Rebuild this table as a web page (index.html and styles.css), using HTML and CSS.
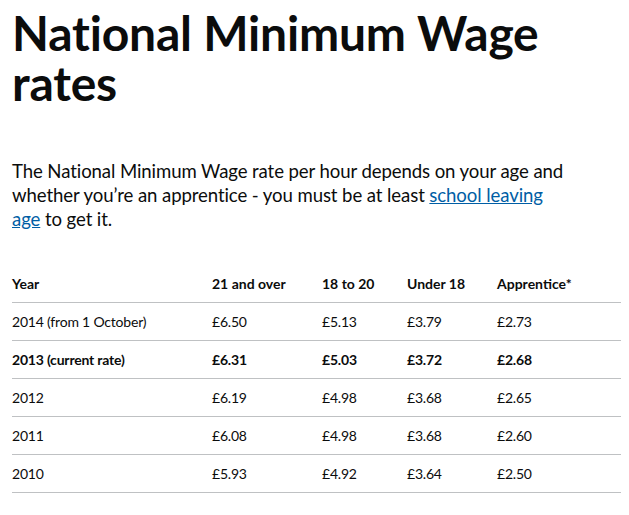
FILE: index.html
```html
<!DOCTYPE html>
<html lang="en">
<head>
<meta charset="utf-8">
<title>National Minimum Wage rates</title>
<link rel="stylesheet" href="styles.css">
</head>
<body>
<main class="page">
  <h1 class="title">National Minimum Wage rates</h1>
  <p class="lead">The National Minimum Wage rate per hour depends on your age and whether you’re an apprentice - you must be at least <a href="#" class="link">school leaving age</a>&nbsp;to get it.</p>
  <table class="rates">
    <thead>
      <tr><th class="c-year">Year</th><th class="c-21">21 and over</th><th class="c-18">18 to 20</th><th class="c-u18">Under 18</th><th class="c-app">Apprentice*</th></tr>
    </thead>
    <tbody>
      <tr><td>2014 (from 1 October)</td><td>£6.50</td><td>£5.13</td><td>£3.79</td><td>£2.73</td></tr>
      <tr class="current"><td>2013 (current rate)</td><td>£6.31</td><td>£5.03</td><td>£3.72</td><td>£2.68</td></tr>
      <tr><td>2012</td><td>£6.19</td><td>£4.98</td><td>£3.68</td><td>£2.65</td></tr>
      <tr><td>2011</td><td>£6.08</td><td>£4.98</td><td>£3.68</td><td>£2.60</td></tr>
      <tr><td>2010</td><td>£5.93</td><td>£4.92</td><td>£3.64</td><td>£2.50</td></tr>
    </tbody>
  </table>
</main>
</body>
</html>
```
FILE: styles.css
```css
html, body { margin: 0; padding: 0; background: #fff; }
body {
  font-family: "Lato", "Liberation Sans", sans-serif;
  color: #0b0c0c;
}
.page { padding: 8px 8px 0 12px; }
.title {
  margin: 0;
  font-size: 48px;
  line-height: 50px;
  font-weight: 700;
  letter-spacing: -0.2px;
  max-width: 580px;
}
.lead {
  margin: 51px 0 0;
  font-size: 18.6px;
  line-height: 24px;
  letter-spacing: -0.1px;
  max-width: 570px;
}
.link { color: #005ea5; text-decoration: underline; }
.rates {
  margin-top: 34px;
  width: 609px;
  border-collapse: collapse;
  font-size: 14px;
}
.rates th, .rates td {
  text-align: left;
  padding: 0;
  height: 37px;
  border-bottom: 1px solid #bfc1c3;
  vertical-align: middle;
}
.rates td { letter-spacing: -0.2px; }
.rates th { font-weight: 700; }
.current td { font-weight: 700; }
.c-year { width: 200px; }
.c-21 { width: 110px; }
.c-18 { width: 85px; }
.c-u18 { width: 90px; }
```
